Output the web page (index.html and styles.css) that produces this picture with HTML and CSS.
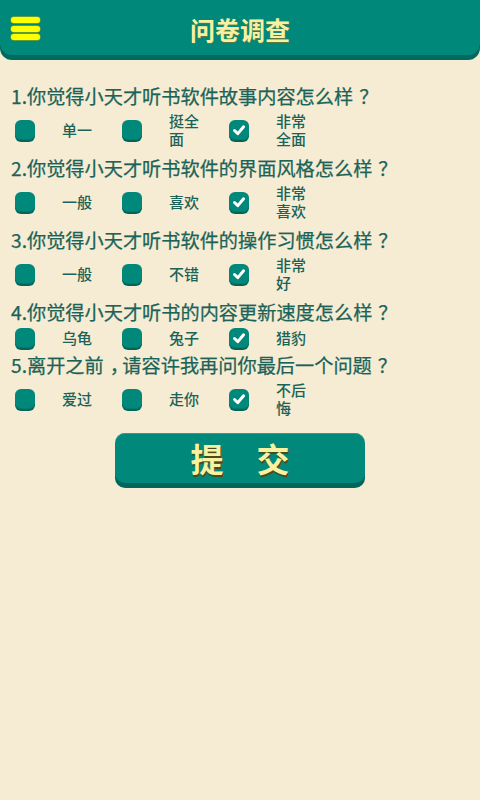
FILE: index.html
```html
<!DOCTYPE html>
<html lang="zh-CN">
<head>
<meta charset="utf-8">
<title>问卷调查</title>
<link rel="stylesheet" href="styles.css">
</head>
<body>
<header class="topbar">
  <button class="menu-btn" aria-label="菜单">
    <span class="bar"></span><span class="bar"></span><span class="bar"></span>
  </button>
  <h1 class="title">问卷调查</h1>
</header>

<main class="survey">
  <section class="question">
    <p class="q-text">1.你觉得小天才听书软件故事内容怎么样<span class="punct">？</span></p>
    <div class="options">
      <label class="option"><span class="box"></span><span class="label">单一</span></label>
      <label class="option"><span class="box"></span><span class="label">挺全面</span></label>
      <label class="option"><span class="box checked"><svg viewBox="0 0 20 20"><path d="M5.5 10.5 L8.8 13.6 L14.6 6.8"/></svg></span><span class="label">非常全面</span></label>
    </div>
  </section>

  <section class="question">
    <p class="q-text">2.你觉得小天才听书软件的界面风格怎么样<span class="punct">？</span></p>
    <div class="options">
      <label class="option"><span class="box"></span><span class="label">一般</span></label>
      <label class="option"><span class="box"></span><span class="label">喜欢</span></label>
      <label class="option"><span class="box checked"><svg viewBox="0 0 20 20"><path d="M5.5 10.5 L8.8 13.6 L14.6 6.8"/></svg></span><span class="label">非常喜欢</span></label>
    </div>
  </section>

  <section class="question">
    <p class="q-text">3.你觉得小天才听书软件的操作习惯怎么样<span class="punct">？</span></p>
    <div class="options">
      <label class="option"><span class="box"></span><span class="label">一般</span></label>
      <label class="option"><span class="box"></span><span class="label">不错</span></label>
      <label class="option"><span class="box checked"><svg viewBox="0 0 20 20"><path d="M5.5 10.5 L8.8 13.6 L14.6 6.8"/></svg></span><span class="label">非常好</span></label>
    </div>
  </section>

  <section class="question">
    <p class="q-text">4.你觉得小天才听书的内容更新速度怎么样<span class="punct">？</span></p>
    <div class="options">
      <label class="option"><span class="box"></span><span class="label">乌龟</span></label>
      <label class="option"><span class="box"></span><span class="label">兔子</span></label>
      <label class="option"><span class="box checked"><svg viewBox="0 0 20 20"><path d="M5.5 10.5 L8.8 13.6 L14.6 6.8"/></svg></span><span class="label">猎豹</span></label>
    </div>
  </section>

  <section class="question short">
    <p class="q-text">5.离开之前<span class="punct">，</span>请容许我再问你最后一个问题<span class="punct">？</span></p>
    <div class="options">
      <label class="option"><span class="box"></span><span class="label">爱过</span></label>
      <label class="option"><span class="box"></span><span class="label">走你</span></label>
      <label class="option"><span class="box checked"><svg viewBox="0 0 20 20"><path d="M5.5 10.5 L8.8 13.6 L14.6 6.8"/></svg></span><span class="label">不后悔</span></label>
    </div>
  </section>

  <div class="actions">
    <button class="submit">提　交</button>
  </div>
</main>
</body>
</html>
```

FILE: styles.css
```css
* {
  box-sizing: border-box;
}

html, body {
  margin: 0;
  padding: 0;
}

body {
  width: 480px;
  min-height: 800px;
  background: #f5ecd3;
  font-family: "Noto Sans CJK SC", "Noto Sans", sans-serif;
  color: #1e6258;
}

/* top bar */
.topbar {
  position: relative;
  height: 55px;
  background: #00897b;
  border-radius: 0 0 12px 12px;
  box-shadow: 0 5px 0 #006a5e;
  display: flex;
  align-items: center;
  justify-content: center;
}

.menu-btn {
  position: absolute;
  left: 11px;
  top: 17px;
  width: 30px;
  height: 23px;
  padding: 0;
  border: 0;
  background: none;
  display: flex;
  flex-direction: column;
  justify-content: space-between;
}

.menu-btn .bar {
  display: block;
  width: 29px;
  height: 6px;
  border-radius: 3px;
  background: #ffff00;
  box-shadow: 0 0 0 0.5px #b8b000;
}

.title {
  margin: 0;
  font-size: 25px;
  font-weight: 700;
  line-height: 1;
  color: #f6f0a4;
  text-shadow: 0 1px 0 #5b7a3e;
  padding-top: 3px;
}

/* survey */
.survey {
  padding-top: 25px;
}

.question {
  margin: 0;
}

.question.short {
  margin-top: -3px;
}

.q-text {
  margin: 0;
  padding: 4px 0 0 11px;
  font-size: 19.2px;
  font-weight: 400;
  line-height: 24px;
  white-space: nowrap;
  color: #1b6358;
  -webkit-text-stroke: 0.25px #1b6358;
}

/* half-width punctuation glyph, padded back out to a centred em */
.punct {
  font-feature-settings: "halt";
  padding-left: 6px;
  padding-right: 3px;
}

.options {
  display: grid;
  grid-template-columns: 107px 107px 107px;
  padding-left: 15px;
}

.option {
  display: flex;
  align-items: center;
  padding: 4px 0;
}

.box {
  flex: none;
  width: 20px;
  height: 20px;
  border-radius: 6px;
  background: #00897b;
  box-shadow: 0 2px 0 #00665a, inset 0 -1px 0 #007a6d;
  margin-right: 27px;
  display: flex;
  align-items: center;
  justify-content: center;
}

.box svg {
  width: 20px;
  height: 20px;
}

.box svg path {
  fill: none;
  stroke: #ffffff;
  stroke-width: 3;
  stroke-linecap: round;
  stroke-linejoin: round;
}

.label {
  width: 32px;
  font-size: 15px;
  font-weight: 500;
  line-height: 18px;
  color: #1b6358;
}

/* submit */
.actions {
  display: flex;
  justify-content: center;
  padding-top: 12px;
}

.submit {
  width: 250px;
  height: 50px;
  border: 0;
  border-radius: 10px;
  background: #00897b;
  box-shadow: 0 5px 0 #00665a, inset 0 1px 0 #25a093;
  font-family: "Noto Sans CJK SC", "Noto Sans", sans-serif;
  font-size: 33px;
  font-weight: 700;
  line-height: 50px;
  color: #f7f1a2;
  text-shadow: 1px 2px 0 #4a4a1c;
  padding: 0;
}
```
